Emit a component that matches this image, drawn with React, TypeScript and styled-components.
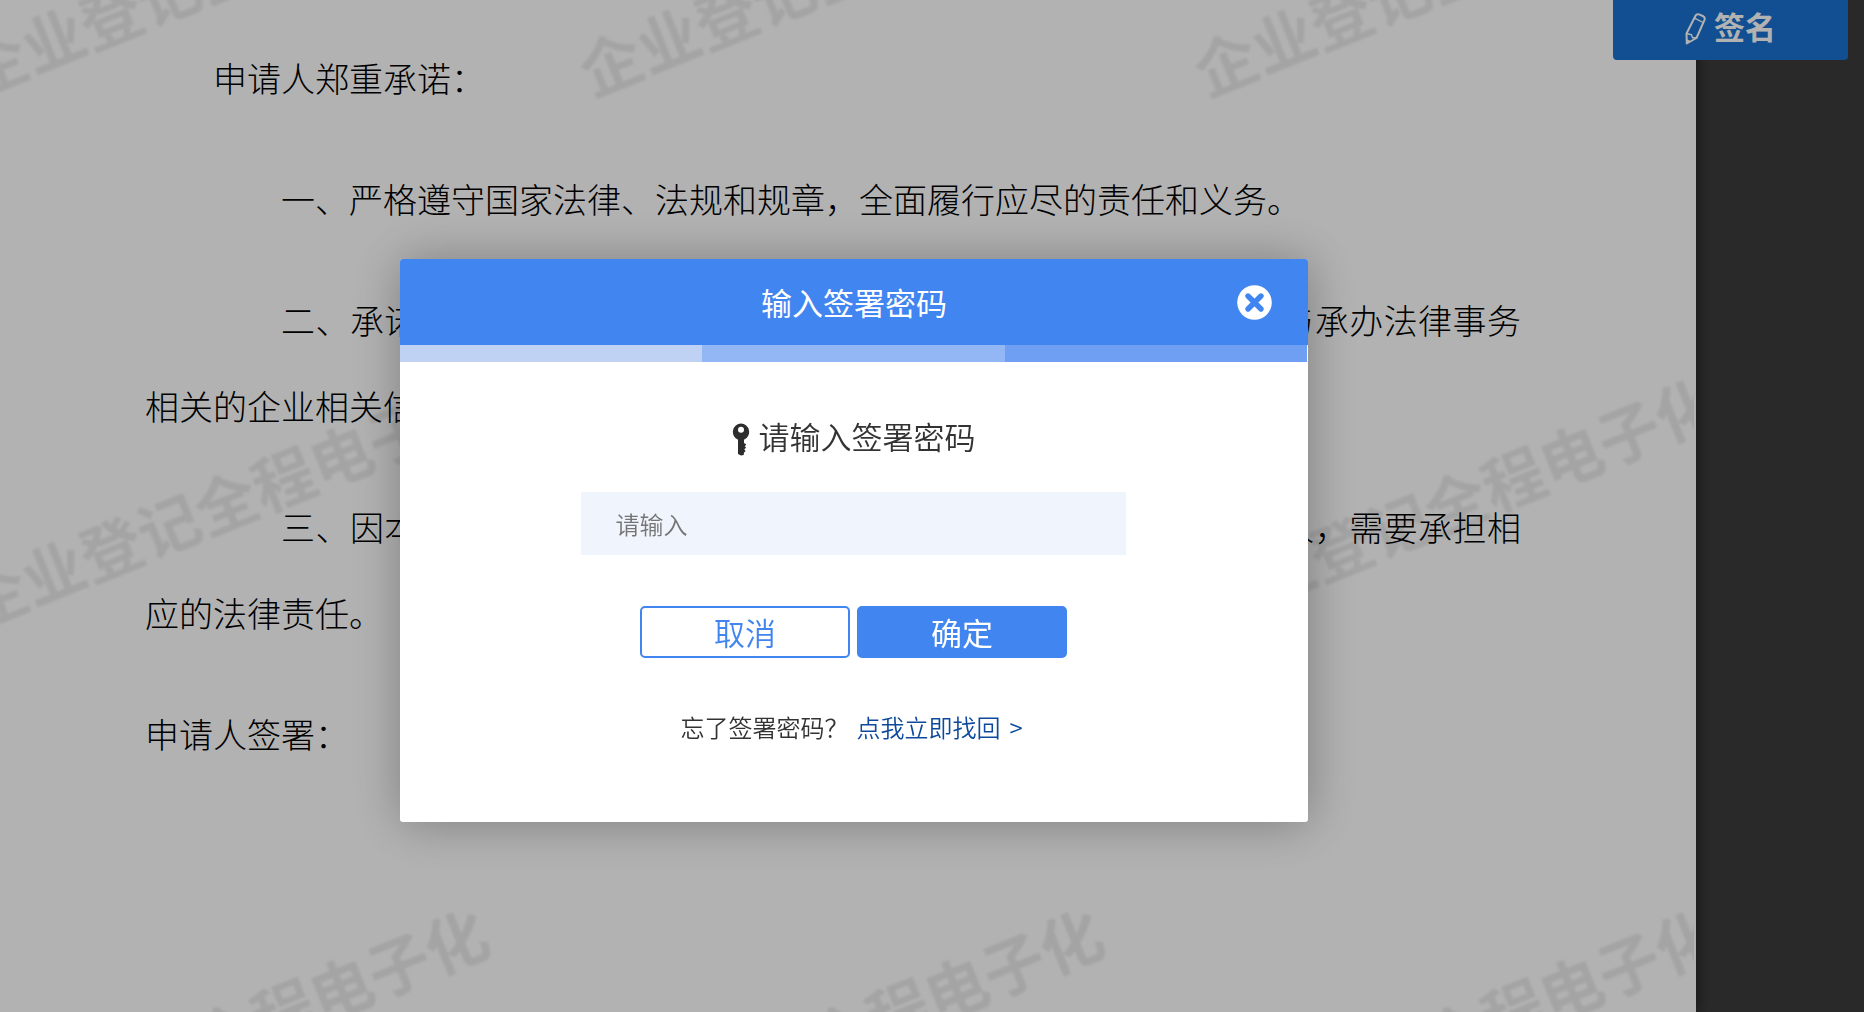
import React from "react";
import styled, { createGlobalStyle } from "styled-components";

const uiFont = `"Noto Sans CJK SC", sans-serif`;

const GlobalStyle = createGlobalStyle`
  * { box-sizing: border-box; }
  body { margin: 0; overflow: hidden; background: #3c3c3c; font-family: ${uiFont}; }
  button, input { font-family: inherit; }
`;

const Viewer = styled.div`
  position: relative;
  display: flex;
  min-height: 100vh;
  max-height: 100vh;
  padding-right: 168px;
  overflow: hidden;
`;

const Page = styled.main`
  position: relative;
  flex: 1;
  padding: 35px 175px 35px 145px;
  background: #fff;
  box-shadow: 0 0 14px rgba(0, 0, 0, 0.6);
`;

const Clause = styled.p<{ $indent?: number }>`
  margin: 0 0 35px;
  font-size: 34px;
  font-weight: 300;
  line-height: 86px;
  text-align: justify;
  text-indent: ${(p) => p.$indent ?? 0}em;
  color: #000;
`;

const Watermarks = styled.div`
  position: absolute;
  inset: 0 2px 0 0;
  overflow: hidden;
  pointer-events: none;
`;

const WatermarkGrid = styled.div`
  display: grid;
  grid-template-columns: repeat(4, 615px);
  grid-auto-rows: 532px;
  place-items: center;
  margin: -298px 0 0 -82px;
`;

const Watermark = styled.span`
  transform: rotate(-22deg);
  font-size: 62px;
  font-weight: 700;
  line-height: 1;
  white-space: nowrap;
  color: rgba(0, 0, 0, 0.08);
  filter: blur(1px);
`;

const SignButton = styled.button`
  position: absolute;
  top: 0;
  right: 16px;
  display: flex;
  align-items: flex-end;
  justify-content: center;
  gap: 8px;
  width: 235px;
  height: 60px;
  padding: 0 0 15px;
  border: 0;
  border-radius: 0 0 4px 4px;
  background: #1972d1;
  color: #fff;
  font-size: 31px;
  font-weight: 700;
  line-height: 38px;
`;

const Overlay = styled.div`
  position: fixed;
  inset: 0;
  display: flex;
  justify-content: center;
  align-items: flex-start;
  padding: 259px 156px 0 0;
  background: rgba(0, 0, 0, 0.3);
`;

const Dialog = styled.section`
  width: 908px;
  padding-bottom: 75px;
  border-radius: 3px;
  background: #fff;
  box-shadow: 1px 1px 50px rgba(0, 0, 0, 0.3);
  color: #333;
`;

const Header = styled.header`
  display: grid;
  grid-template-columns: 1fr auto 1fr;
  align-items: center;
  height: 86px;
  padding: 0 36px;
  border-radius: 3px 3px 0 0;
  background: #4185f0;
  color: #fff;
`;

const Title = styled.h1`
  grid-column: 2;
  margin: 0;
  font-size: 31px;
  font-weight: 400;
  line-height: 40px;
`;

const CloseButton = styled.button`
  justify-self: end;
  display: flex;
  padding: 0;
  border: 0;
  background: none;
`;

const Steps = styled.div`
  display: grid;
  grid-template-columns: repeat(3, 1fr);
  height: 17px;
  padding-right: 1px;
`;

const Step = styled.span<{ $color: string }>`
  background: ${(p) => p.$color};
`;

const Form = styled.form`
  display: flex;
  flex-direction: column;
  align-items: center;
  padding: 54px 1px 0 0;
`;

const Prompt = styled.label`
  display: flex;
  align-items: flex-end;
  gap: 9px;
  font-size: 31px;
  font-weight: 350;
  line-height: 40px;
`;

const PasswordInput = styled.input`
  width: 60%;
  height: 63px;
  margin-top: 36px;
  padding: 0 34px;
  border: 0;
  border-radius: 0;
  outline: 0;
  background: #f0f4fc;
  color: #333;
  font-size: 24px;
  font-weight: 350;

  &::placeholder { color: #757575; opacity: 1; }
`;

const Actions = styled.div`
  display: flex;
  gap: 7px;
  margin-top: 51px;
`;

const ActionButton = styled.button<{ $primary?: boolean }>`
  width: 210px;
  height: 52px;
  padding: 0;
  border: 2px solid #4185f0;
  border-radius: 5px;
  background: ${(p) => (p.$primary ? "#4185f0" : "#fff")};
  color: ${(p) => (p.$primary ? "#fff" : "#4185f0")};
  font-size: 31px;
  font-weight: ${(p) => (p.$primary ? 400 : 350)};
  line-height: 40px;
`;

const Forgot = styled.p`
  display: flex;
  gap: 8px;
  margin: 49px 0 0;
  font-size: 24px;
  font-weight: 350;
  line-height: 40px;
`;

const RecoverLink = styled.a`
  display: flex;
  gap: 9px;
  padding-right: 4px;
  color: #0d4a9c;
  text-decoration: none;
`;

const PencilIcon = () => (
  <svg width="21" height="32" viewBox="0 0 21 32" fill="none" stroke="currentColor" strokeLinejoin="round" aria-hidden="true">
    <path strokeWidth="2" d="M1.500 20.500 10.500 2.800C11.300 1.200 12.600.9 14 1.400l3.800 1.600c1.700.8 2.400 2.200 1.700 3.900L11.500 25 1.800 30.500Z" />
    <path strokeWidth="1.400" d="M9.600 5.200 18 9.500M1.500 20.500l5 1.300 1 3 4 0" />
    <path fill="currentColor" stroke="none" d="M1.500 26 6 28.200 1.500 31Z" />
  </svg>
);

const CloseIcon = () => (
  <svg width="35" height="35" viewBox="0 0 35 35" aria-hidden="true">
    <circle cx="17.5" cy="17.5" r="17.300" fill="#fff" />
    <path d="M11 11 24 24M24 11 11 24" stroke="#4185f0" strokeWidth="5.400" strokeLinecap="round" />
  </svg>
);

const KeyIcon = () => (
  <svg width="18" height="33" viewBox="0 0 18 33" aria-hidden="true">
    <path
      fill="#2d2d2d"
      fillRule="evenodd"
      d="M9 .5a8.500 8.500 0 0 1 3 16.300v3.200l2.300 1.600-1.500 1.600 1.300 1.600-1.800 1.500 1.300 2-1.600 1.300-.3 2.300L9 32.500l-3-1.400V16.800A8.500 8.500 0 0 1 9 .5Zm0 3.300a3 3 0 1 0 0 6 3 3 0 0 0 0-6Z"
    />
  </svg>
);

const stepColors = ["#bfd2f3", "#93b6f5", "#6f9ff3"];

const clauses = [
  { indent: 2, text: "申请人郑重承诺：" },
  { indent: 4, text: "一、严格遵守国家法律、法规和规章，全面履行应尽的责任和义务。" },
  {
    indent: 4,
    text: "二、承诺人所提交的全部材料真实、合法、有效，并自愿依法公开与承办法律事务相关的企业相关信息。",
  },
  {
    indent: 4,
    text: "三、因本承诺内容不实或者未履行承诺义务而损害了国家利益或他人，需要承担相应的法律责任。",
  },
  { indent: 0, text: "申请人签署：" },
];

export default function App() {
  return (
    <>
      <GlobalStyle />
      <Viewer>
        <Page>
          {clauses.map((c) => (
            <Clause key={c.text} $indent={c.indent}>{c.text}</Clause>
          ))}
          <Watermarks aria-hidden="true">
            <WatermarkGrid>
              {Array.from({ length: 12 }, (_, i) => (
                <Watermark key={i}>企业登记全程电子化</Watermark>
              ))}
            </WatermarkGrid>
          </Watermarks>
        </Page>
        <SignButton type="button">
          <PencilIcon />
          签名
        </SignButton>
      </Viewer>
      <Overlay>
        <Dialog role="dialog" aria-modal="true" aria-labelledby="dialog-title">
          <Header>
            <Title id="dialog-title">输入签署密码</Title>
            <CloseButton type="button" aria-label="关闭">
              <CloseIcon />
            </CloseButton>
          </Header>
          <Steps>
            {stepColors.map((color) => (
              <Step key={color} $color={color} />
            ))}
          </Steps>
          <Form onSubmit={(e) => e.preventDefault()}>
            <Prompt htmlFor="sign-password">
              <KeyIcon />
              请输入签署密码
            </Prompt>
            <PasswordInput id="sign-password" type="password" placeholder="请输入" />
            <Actions>
              <ActionButton type="button">取消</ActionButton>
              <ActionButton type="submit" $primary>确定</ActionButton>
            </Actions>
            <Forgot>
              忘了签署密码？
              <RecoverLink href="#recover">
                点我立即找回<span>&gt;</span>
              </RecoverLink>
            </Forgot>
          </Form>
        </Dialog>
      </Overlay>
    </>
  );
}
